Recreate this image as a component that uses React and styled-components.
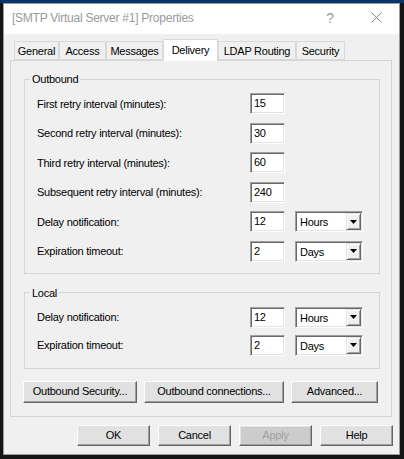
import React from 'react'
import styled, { createGlobalStyle } from 'styled-components'

const GlobalStyle = createGlobalStyle`
  html, body { margin: 0; padding: 0; }
  body {
    background: #141414;
    font-family: 'Liberation Sans', Arial, sans-serif;
  }
`

const Screen = styled.div`
  width: 404px;
  height: 459px;
  box-sizing: border-box;
  padding: 3px 4px 4px 3px;
  background: linear-gradient(#0c355f 0 3px, #141414 3px);
`

const Window = styled.div`
  height: 100%;
  box-sizing: border-box;
  border: 1px solid #9b9b9b;
  background: #f0f0f0;
  display: flex;
  flex-direction: column;
  font-size: 11px;
  letter-spacing: -0.25px;
  color: #000;
`

const TitleBar = styled.div`
  height: 30px;
  flex: none;
  background: #fff;
  display: flex;
  align-items: center;
  padding-left: 8px;
`

const Title = styled.div`
  flex: 1;
  font-size: 12px;
  color: #9a9a9a;
  padding-bottom: 3px;
`

const CaptionButton = styled.div`
  width: 46px;
  height: 30px;
  box-sizing: border-box;
  padding-bottom: 3px;
  display: flex;
  align-items: center;
  justify-content: center;
  color: #9a9a9a;
  font-size: 14px;
`

const Body = styled.div`
  flex: 1;
  padding: 5px 7px 0 6px;
`

const TabStrip = styled.div`
  display: flex;
  align-items: flex-end;
  height: 22px;
  padding-left: 4px;
  margin-bottom: -1px;
  position: relative;
  z-index: 1;
`

const Tab = styled.div`
  width: ${p => p.$w}px;
  height: ${p => (p.$active ? 22 : 19)}px;
  margin-bottom: ${p => (p.$active ? 0 : 1)}px;
  box-sizing: border-box;
  border: 1px solid #d9d9d9;
  border-bottom: ${p => (p.$active ? 'none' : '1px solid #d9d9d9')};
  background: ${p => (p.$active ? '#fff' : '#f0f0f0')};
  display: flex;
  align-items: center;
  justify-content: center;
  padding-bottom: ${p => (p.$active ? 2 : 0)}px;
`

const Panel = styled.div`
  border: 1px solid #d4d4d4;
  background: #f0f0f0;
  padding: 12px 11px 13px 13px;
  display: flex;
  flex-direction: column;
`

const Group = styled.fieldset`
  margin: ${p => p.$top || 0}px 0 0;
  border: 1px solid #d5d5d5;
  padding: 8px 16px ${p => p.$bottom}px 12px;
  min-width: 0;
`

const Legend = styled.legend`
  padding: 0 2px;
  margin-left: -7px;
  line-height: 12px;
`

const Rows = styled.div`
  display: grid;
  grid-template-columns: 1fr 35px 68px;
  grid-auto-rows: 21px;
  column-gap: 10px;
  row-gap: ${p => p.$gap}px;
  align-items: center;
`

const Label = styled.div`
  grid-column: 1;
  white-space: nowrap;
`

const sunken = `
  box-sizing: border-box;
  height: 21px;
  background: #fff;
  border: 1px solid;
  border-color: #a0a0a0 #fff #fff #a0a0a0;
  box-shadow: inset 1px 1px #696969, inset -1px -1px #e3e3e3;
`

const Field = styled.div`
  ${sunken}
  grid-column: 2;
  padding: 2px 3px 0;
  line-height: 15px;
`

const Dropdown = styled.div`
  ${sunken}
  grid-column: 3;
  display: flex;
  padding: 1px;
`

const DropdownText = styled.span`
  flex: 1;
  padding: 2px 0 0 3px;
  line-height: 14px;
`

const DropdownArrow = styled.span`
  width: 15px;
  box-sizing: border-box;
  background: #f0f0f0;
  border: 1px solid;
  border-color: #e3e3e3 #696969 #696969 #e3e3e3;
  box-shadow: inset 1px 1px #fff, inset -1px -1px #a0a0a0;
  display: flex;
  align-items: center;
  justify-content: center;
`

const ButtonRow = styled.div`
  display: flex;
  gap: 7px;
  margin: 12px 0 0 -1px;
`

const Footer = styled.div`
  display: flex;
  justify-content: flex-end;
  gap: 8px;
  margin: 8px -1px 0 0;
`

const Button = styled.div`
  width: ${p => p.$w}px;
  height: ${p => p.$h}px;
  box-sizing: border-box;
  display: flex;
  align-items: center;
  justify-content: center;
  background: ${p => (p.$disabled ? '#cccccc' : '#e1e1e1')};
  color: ${p => (p.$disabled ? '#a0a0a0' : '#000')};
  border: 1px solid;
  border-color: #fcfcfc #646464 #646464 #fcfcfc;
  box-shadow: inset -1px -1px #a0a0a0, inset 1px 1px #e3e3e3;
  padding-bottom: 1px;
`

const tabs = [
  ['General', 45],
  ['Access', 47],
  ['Messages', 57],
  ['Delivery', 55],
  ['LDAP Routing', 78],
  ['Security', 49],
]

function Arrow() {
  return (
    <svg width="7" height="4" viewBox="0 0 7 4">
      <polygon points="0,0 7,0 3.5,4" fill="#000" />
    </svg>
  )
}

function Select({ value }) {
  return (
    <Dropdown>
      <DropdownText>{value}</DropdownText>
      <DropdownArrow><Arrow /></DropdownArrow>
    </Dropdown>
  )
}

function Row({ label, value, unit }) {
  return (
    <>
      <Label>{label}</Label>
      <Field>{value}</Field>
      {unit && <Select value={unit} />}
    </>
  )
}

export default function App() {
  return (
    <Screen>
      <GlobalStyle />
      <Window>
        <TitleBar>
          <Title>[SMTP Virtual Server #1] Properties</Title>
          <CaptionButton>?</CaptionButton>
          <CaptionButton>
            <svg width="11" height="11" viewBox="0 0 11 11">
              <path d="M0.5 0.5 L10.5 10.5 M10.5 0.5 L0.5 10.5" stroke="#8a8a8a" strokeWidth="1" />
            </svg>
          </CaptionButton>
        </TitleBar>
        <Body>
          <TabStrip>
            {tabs.map(([name, w]) => (
              <Tab key={name} $w={w} $active={name === 'Delivery'}>{name}</Tab>
            ))}
          </TabStrip>
          <Panel>
            <Group $bottom={11}>
              <Legend>Outbound</Legend>
              <Rows $gap={8.5}>
                <Row label="First retry interval (minutes):" value="15" />
                <Row label="Second retry interval (minutes):" value="30" />
                <Row label="Third retry interval (minutes):" value="60" />
                <Row label="Subsequent retry interval (minutes):" value="240" />
                <Row label="Delay notification:" value="12" unit="Hours" />
                <Row label="Expiration timeout:" value="2" unit="Days" />
              </Rows>
            </Group>
            <Group $top={13} $bottom={12}>
              <Legend>Local</Legend>
              <Rows $gap={7}>
                <Row label="Delay notification:" value="12" unit="Hours" />
                <Row label="Expiration timeout:" value="2" unit="Days" />
              </Rows>
            </Group>
            <ButtonRow>
              <Button $w={114} $h={22}>Outbound Security...</Button>
              <Button $w={140} $h={22}>Outbound connections...</Button>
              <Button $w={87} $h={22}>Advanced...</Button>
            </ButtonRow>
          </Panel>
          <Footer>
            <Button $w={73} $h={21}>OK</Button>
            <Button $w={73} $h={21}>Cancel</Button>
            <Button $w={73} $h={21} $disabled>Apply</Button>
            <Button $w={73} $h={21}>Help</Button>
          </Footer>
        </Body>
      </Window>
    </Screen>
  )
}
